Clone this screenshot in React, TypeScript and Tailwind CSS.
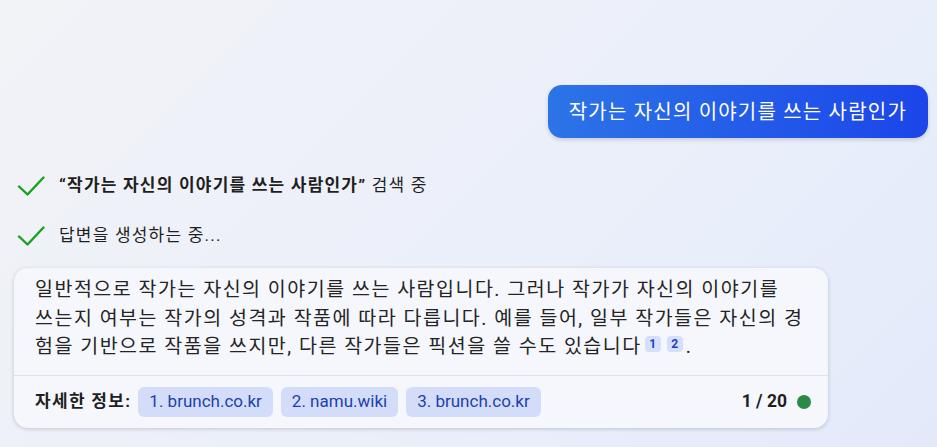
import React from "react";

const FONT = { fontFamily: '"Roboto", "Noto Sans CJK KR", sans-serif' };

function Check() {
  return (
    <svg width="28" height="22" viewBox="0 0 28 22" fill="none" className="shrink-0">
      <path d="M2 11.5 L10.5 19.5 L26.5 2.5" stroke="#1aa01f" strokeWidth="2.4" strokeLinecap="round" strokeLinejoin="round" />
    </svg>
  );
}

function Sup({ n }: { n: string }) {
  return (
    <span className="mx-[3px] inline-flex h-[16px] w-[16px] items-center justify-center rounded-[4px] bg-[#d5dffa] align-[5px] text-[12px] font-bold leading-none tracking-normal text-[#1e40c0]">
      {n}
    </span>
  );
}

function Chip({ label }: { label: string }) {
  return (
    <span className="inline-flex h-[30px] items-center rounded-[6px] bg-[#d3ddfa] px-[11px] text-[17px] text-[#1e3fae]">
      {label}
    </span>
  );
}

export default function App() {
  return (
    <div
      style={FONT}
      className="flex h-[447px] w-full flex-col overflow-hidden bg-[linear-gradient(135deg,#f2f3f7_0%,#edf0f9_40%,#e8eefa_70%,#e2eafa_100%)] text-[#1f1f1f]"
    >
      <div className="flex justify-end pr-[9px] pt-[85px]">
        <div className="flex h-[53px] items-center rounded-[14px] bg-[linear-gradient(90deg,#2c74e7,#1c45ea)] px-[21px] text-[20px] tracking-[1.2px] text-white shadow-[0_2px_4px_rgba(0,0,0,0.15)]">
          작가는 자신의 이야기를 쓰는 사람인가
        </div>
      </div>

      <div className="mt-[35px] flex h-[26px] items-center gap-[14px] pl-[17px] text-[17px] tracking-[1.2px]">
        <Check />
        <span>
          <b className="font-bold">“작가는 자신의 이야기를 쓰는 사람인가”</b> 검색 중
        </span>
      </div>
      <div className="mt-[24px] flex h-[26px] items-center gap-[14px] pl-[17px] text-[17px] tracking-[1.2px]">
        <Check />
        <span>답변을 생성하는 중...</span>
      </div>

      <div className="ml-[14px] mt-[19px] w-[814px] rounded-[14px] bg-[#f5f7fd] shadow-[0_1px_4px_rgba(0,0,0,0.18)]">
        <div className="whitespace-nowrap px-[21px] pb-[13px] pt-[8px] text-[19.5px] leading-[28.5px] tracking-[1.5px] text-[#242424]">
          일반적으로 작가는 자신의 이야기를 쓰는 사람입니다. 그러나 작가가 자신의 이야기를
          <br />
          쓰는지 여부는 작가의 성격과 작품에 따라 다릅니다. 예를 들어, 일부 작가들은 자신의 경
          <br />
          험을 기반으로 작품을 쓰지만, 다른 작가들은 픽션을 쓸 수도 있습니다
          <Sup n="1" />
          <Sup n="2" />.
        </div>
        <div className="flex items-center border-t border-[#dde1ea] py-[11px] pl-[21px] pr-[17px]">
          <span className="mr-[7px] text-[17px] font-bold tracking-[1.3px] text-[#1f1f1f]">자세한 정보:</span>
          <div className="flex gap-[8px]">
            <Chip label="1. brunch.co.kr" />
            <Chip label="2. namu.wiki" />
            <Chip label="3. brunch.co.kr" />
          </div>
          <div className="ml-auto flex items-center gap-[10px]">
            <span className="text-[17.5px] font-bold text-[#1f1f1f]">1 / 20</span>
            <span className="h-[14px] w-[14px] rounded-full bg-[#2c8a48]" />
          </div>
        </div>
      </div>
    </div>
  );
}
